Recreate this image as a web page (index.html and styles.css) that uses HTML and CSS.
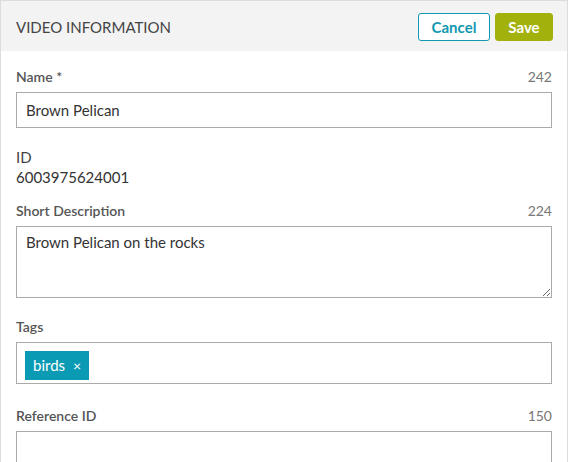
FILE: index.html
```html
<!DOCTYPE html>
<html>
<head>
<meta charset="utf-8">
<link rel="stylesheet" href="styles.css">
</head>
<body>
<div class="panel">
  <div class="header">
    <div class="title">VIDEO INFORMATION</div>
    <div class="actions">
      <button class="btn btn-cancel">Cancel</button>
      <button class="btn btn-save">Save</button>
    </div>
  </div>
  <div class="body">
    <div class="field">
      <div class="label-row"><span class="label">Name *</span><span class="count">242</span></div>
      <input class="input" type="text" value="Brown Pelican">
    </div>
    <div class="field static">
      <div class="label-row"><span class="label">ID</span></div>
      <div class="value">6003975624001</div>
    </div>
    <div class="field">
      <div class="label-row"><span class="label">Short Description</span><span class="count">224</span></div>
      <textarea class="textarea">Brown Pelican on the rocks</textarea>
    </div>
    <div class="field tags-field">
      <div class="label-row"><span class="label">Tags</span></div>
      <div class="tags"><span class="tag">birds <span class="tag-x">×</span></span></div>
    </div>
    <div class="field">
      <div class="label-row"><span class="label">Reference ID</span><span class="count">150</span></div>
      <input class="input" type="text" value="">
    </div>
  </div>
</div>
</body>
</html>
```
FILE: styles.css
```css
* { box-sizing: border-box; }
html, body { margin: 0; padding: 0; background: #fff; }
body { font-family: Lato, "Open Sans", sans-serif; color: #333; overflow: hidden; }
.panel {
  width: 568px;
  min-height: 470px;
  border: 1px solid #dcdcdc;
  border-bottom: none;
}
.header {
  height: 50px;
  background: #f3f3f3;
  display: flex;
  align-items: center;
  justify-content: space-between;
  padding: 0 14px 0 15px;
}
.title { font-size: 15px; color: #444; margin-top: 2px; }
.actions { display: flex; gap: 5px; margin-top: 2px; }
.btn {
  font-family: Lato, sans-serif;
  font-weight: bold;
  font-size: 15px;
  height: 28px;
  border-radius: 3px;
  padding: 0;
  cursor: pointer;
}
.btn-cancel { width: 72px; background: #fff; border: 1px solid #1398b2; color: #1398b2; }
.btn-save { width: 58px; background: #a3b10d; border: 1px solid #a3b10d; color: #fff; }
.body { padding: 16px 15px 0 15px; }
.field { margin-bottom: 19px; }
.field.static { margin-bottom: 14px; }
.field.tags-field { margin-bottom: 22px; }
.label-row {
  display: flex;
  justify-content: space-between;
  align-items: baseline;
  height: 20px;
  line-height: 20px;
  margin-bottom: 5px;
}
.static .label-row { margin-bottom: 0; }
.label { font-size: 14px; font-weight: 600; color: #555; }
.static .label { font-size: 15px; font-weight: normal; color: #444; }
.count { font-size: 14px; color: #777; }
.value { font-size: 15px; color: #333; line-height: 20px; }
.input, .textarea {
  display: block;
  width: 100%;
  border: 1px solid #aaa;
  border-radius: 0;
  font-family: Lato, sans-serif;
  font-size: 15px;
  color: #333;
  padding: 0 9px;
  outline: none;
  background: #fff;
}
.input { height: 36px; }
.textarea { height: 72px; padding: 5px 9px; resize: vertical; line-height: 20px; }
.tags {
  border: 1px solid #aaa;
  height: 42px;
  padding: 8px;
  display: flex;
  align-items: flex-start;
}
.tag {
  background: #0b9ab4;
  color: #fff;
  font-size: 15px;
  height: 29px;
  line-height: 29px;
  padding: 0 8px;
  display: inline-flex;
  align-items: center;
  gap: 8px;
}
.tag-x { font-size: 14px; }
```
